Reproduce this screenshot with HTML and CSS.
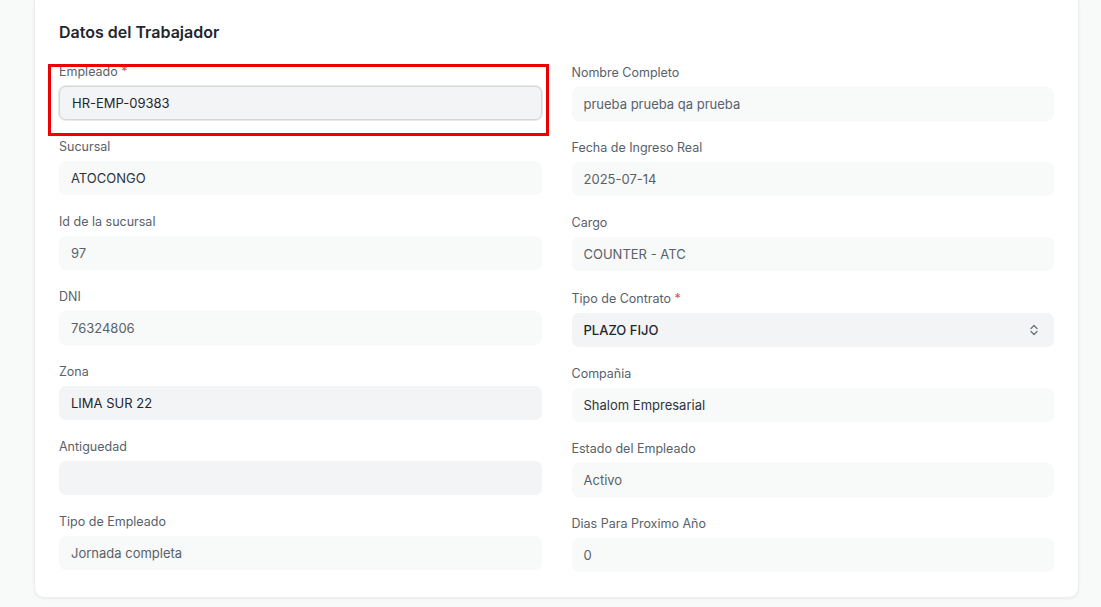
FILE: index.html
```html
<!DOCTYPE html>
<html lang="es">
  <head>
    <meta charset="UTF-8" />
    <meta name="viewport" content="width=device-width, initial-scale=1.0" />
    <title>Datos del Trabajador</title>
    <link rel="stylesheet" href="styles.css">
  </head>
  <body>
    <div class="page">
      <div class="card">
        <h3 class="section-title">Datos del Trabajador</h3>
        <div class="section-body">
          <div class="column">
            <div class="field highlight">
              <label>Empleado <span class="reqd">*</span></label>
              <div class="control edit focus">HR-EMP-09383</div>
            </div>
            <div class="field">
              <label>Sucursal</label>
              <div class="control link">ATOCONGO</div>
            </div>
            <div class="field">
              <label>Id de la sucursal</label>
              <div class="control">97</div>
            </div>
            <div class="field">
              <label>DNI</label>
              <div class="control">76324806</div>
            </div>
            <div class="field">
              <label>Zona</label>
              <div class="control edit">LIMA SUR 22</div>
            </div>
            <div class="field">
              <label>Antiguedad</label>
              <div class="control edit"></div>
            </div>
            <div class="field">
              <label>Tipo de Empleado</label>
              <div class="control">Jornada completa</div>
            </div>
          </div>

          <div class="column right">
            <div class="field">
              <label>Nombre Completo</label>
              <div class="control">prueba prueba qa prueba</div>
            </div>
            <div class="field">
              <label>Fecha de Ingreso Real</label>
              <div class="control">2025-07-14</div>
            </div>
            <div class="field">
              <label>Cargo</label>
              <div class="control">COUNTER - ATC</div>
            </div>
            <div class="field">
              <label>Tipo de Contrato <span class="reqd">*</span></label>
              <div class="control edit select">
                <span class="selected">PLAZO FIJO</span>
                <svg class="caret" width="10" height="14" viewBox="0 0 10 14">
                  <path d="M2 5.5 L5 2.5 L8 5.5" />
                  <path d="M2 8.5 L5 11.5 L8 8.5" />
                </svg>
              </div>
            </div>
            <div class="field">
              <label>Compañia</label>
              <div class="control link">Shalom Empresarial</div>
            </div>
            <div class="field">
              <label>Estado del Empleado</label>
              <div class="control">Activo</div>
            </div>
            <div class="field">
              <label>Dias Para Proximo Año</label>
              <div class="control">0</div>
            </div>
          </div>
        </div>
      </div>
    </div>
  </body>
</html>
```

FILE: styles.css
```css
body {
  margin: 0;
  font-family: Inter, "Noto Sans", sans-serif;
  background-color: #f8f9f9;
  color: #1f272e;
}
.page {
  padding: 0 22px 9px 34px;
}
.card {
  background: white;
  border: 1px solid #eceeef;
  border-top: none;
  border-radius: 0 0 10px 10px;
  box-shadow: 0 1px 3px rgba(0, 0, 0, 0.06);
  padding: 22px 24px 7px 24px;
  position: relative;
}
.card::before {
  content: "";
  position: absolute;
  top: -10px;
  left: -1px;
  right: -1px;
  height: 20px;
  border: 1px solid #eceeef;
  border-bottom: none;
  border-radius: 10px 10px 0 0;
  background: white;
}
.section-title {
  position: relative;
  margin: 0 0 21px 0;
  font-size: 16px;
  line-height: 20px;
  font-weight: 600;
  color: #1f272e;
}
.section-body {
  display: grid;
  grid-template-columns: 1fr 1fr;
  gap: 30px;
}
.column {
  display: flex;
  flex-direction: column;
}
.field {
  position: relative;
  margin-bottom: 18px;
}
.right .field {
  margin-bottom: 18.2px;
}
.right .field:first-child {
  padding-top: 1px;
}
.field label {
  display: block;
  font-size: 12.5px;
  line-height: 18px;
  color: #58616a;
  margin-bottom: 5px;
}
.reqd {
  color: #e24c4c;
}
.control {
  height: 34px;
  box-sizing: border-box;
  padding: 0 12px;
  display: flex;
  align-items: center;
  font-size: 13px;
  color: #58616a;
  background-color: #f8f9f9;
  border-radius: 7px;
}
.control.edit {
  background-color: #f3f4f6;
  color: #1f272e;
}
.control.link {
  color: #2f353b;
}
.control.focus {
  border: 1px solid #d4d7da;
  box-shadow: 0 0 0 1px #e8eaec;
  height: 34px;
}
.control.select {
  justify-content: space-between;
}
.selected {
  font-weight: 500;
}
.caret {
  margin-right: 3px;
}
.caret path {
  fill: none;
  stroke: #6b737b;
  stroke-width: 1.3;
  stroke-linecap: round;
  stroke-linejoin: round;
}
.highlight::after {
  content: "";
  position: absolute;
  left: -11px;
  right: -7px;
  top: 1px;
  bottom: -16px;
  border: 3px solid #ee0000;
  pointer-events: none;
}
```
